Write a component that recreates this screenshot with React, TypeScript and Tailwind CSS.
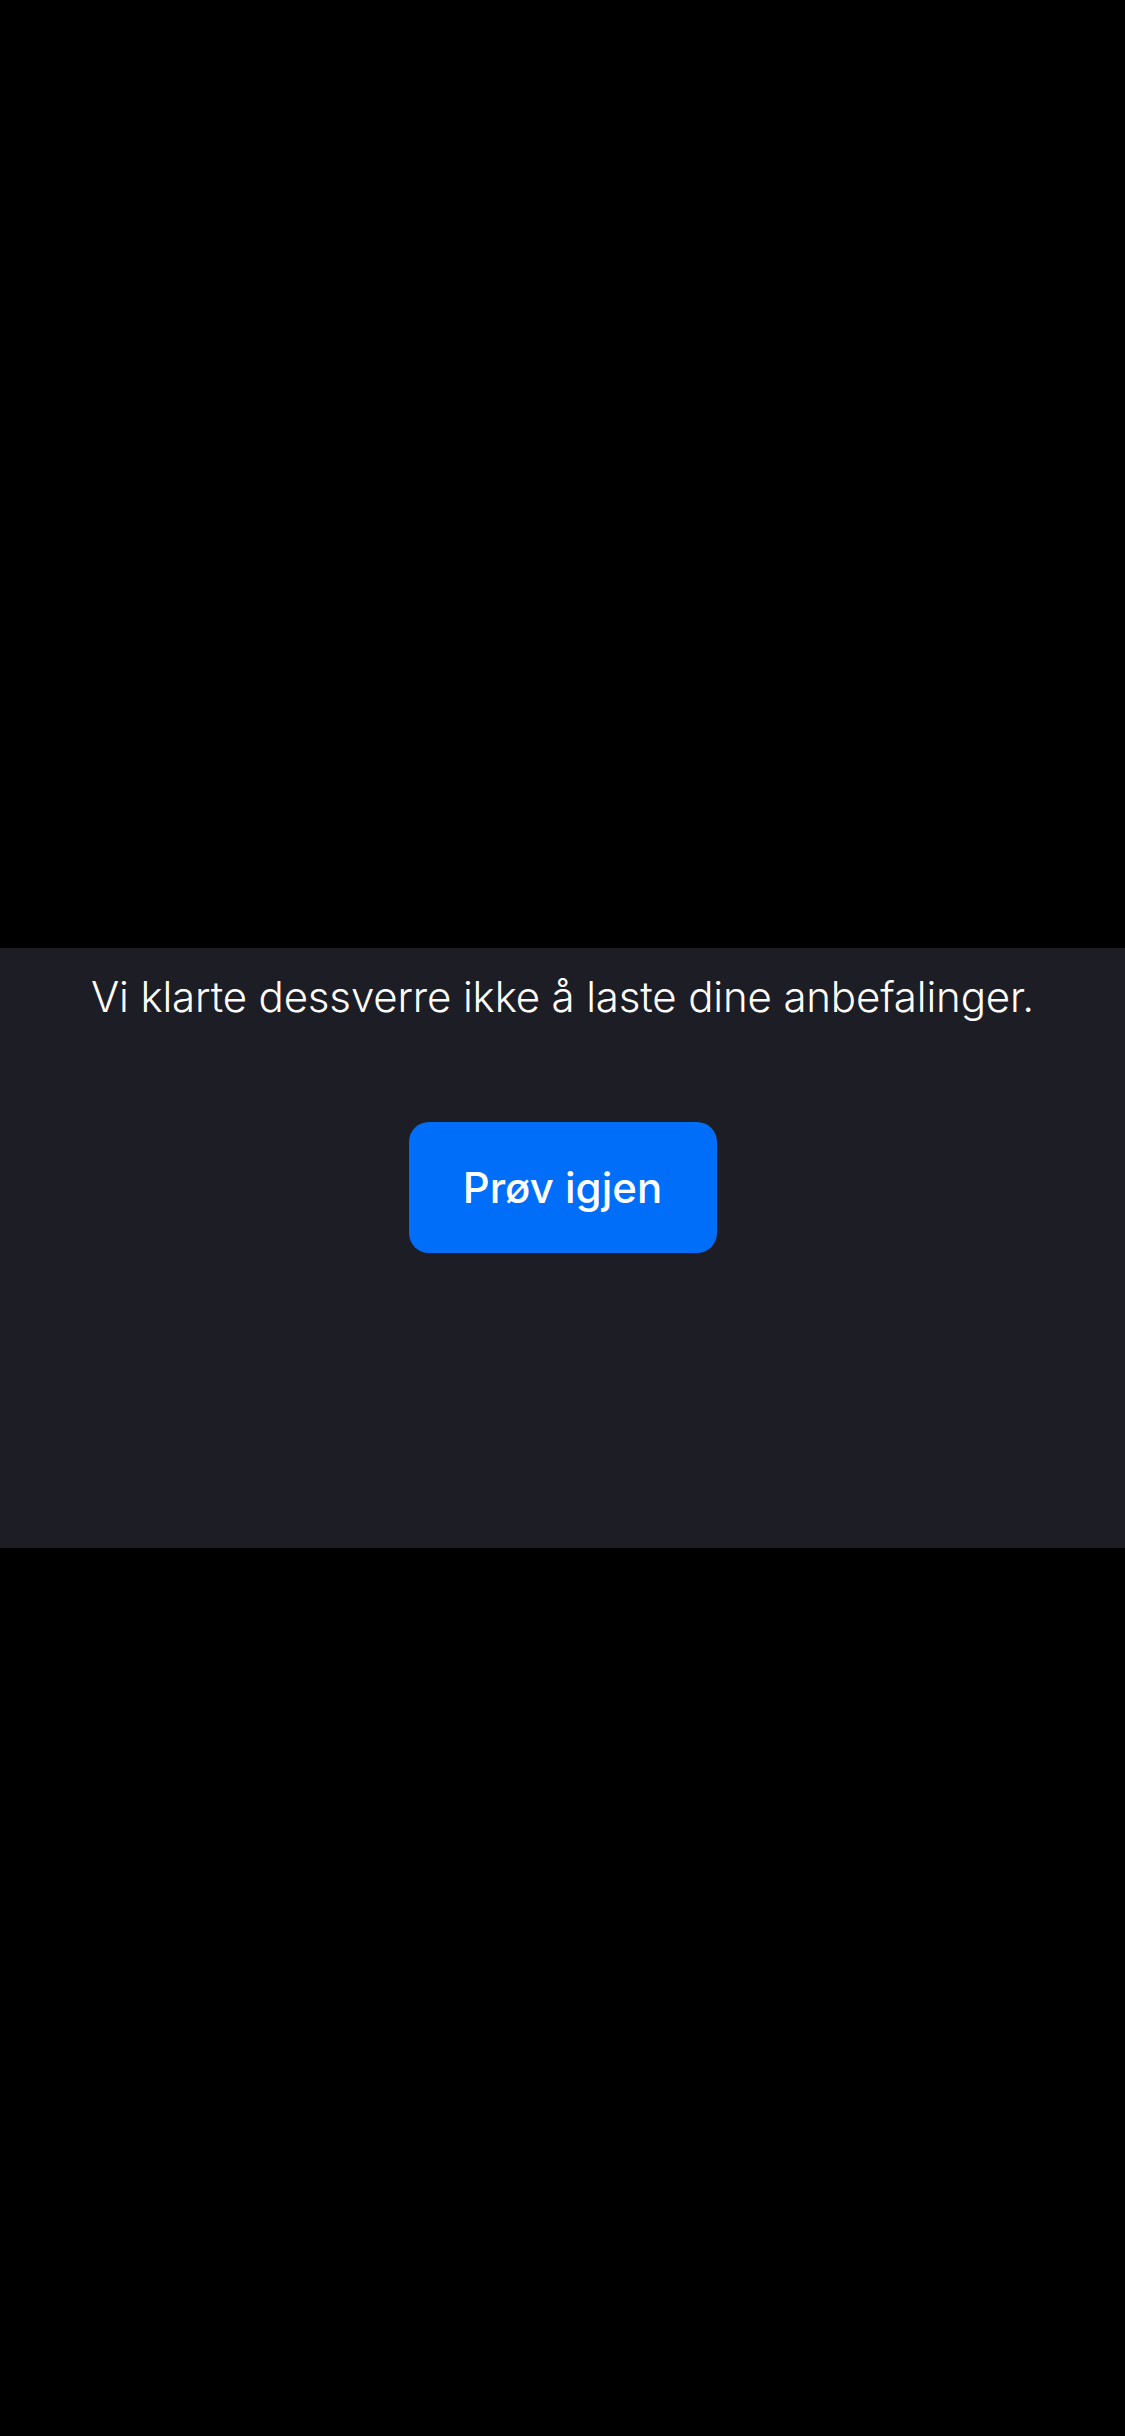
export default function App() {
  return (
    <div className="min-h-[2436px] w-full bg-black flex flex-col" style={{ fontFamily: "Inter, 'Noto Sans', sans-serif" }}>
      <div className="h-[948px] shrink-0" />
      <div className="h-[600px] w-full bg-[#1d1d25] flex flex-col items-center pt-[23px]">
        <p className="text-[42px] leading-[52px] font-light text-white tracking-[-0.15px]">
          Vi klarte dessverre ikke å laste dine anbefalinger.
        </p>
        <button
          type="button"
          className="mt-[99px] w-[308px] h-[131px] rounded-[20px] bg-[#006ef9] text-white text-[42px] font-medium"
        >
          Prøv igjen
        </button>
      </div>
    </div>
  );
}
